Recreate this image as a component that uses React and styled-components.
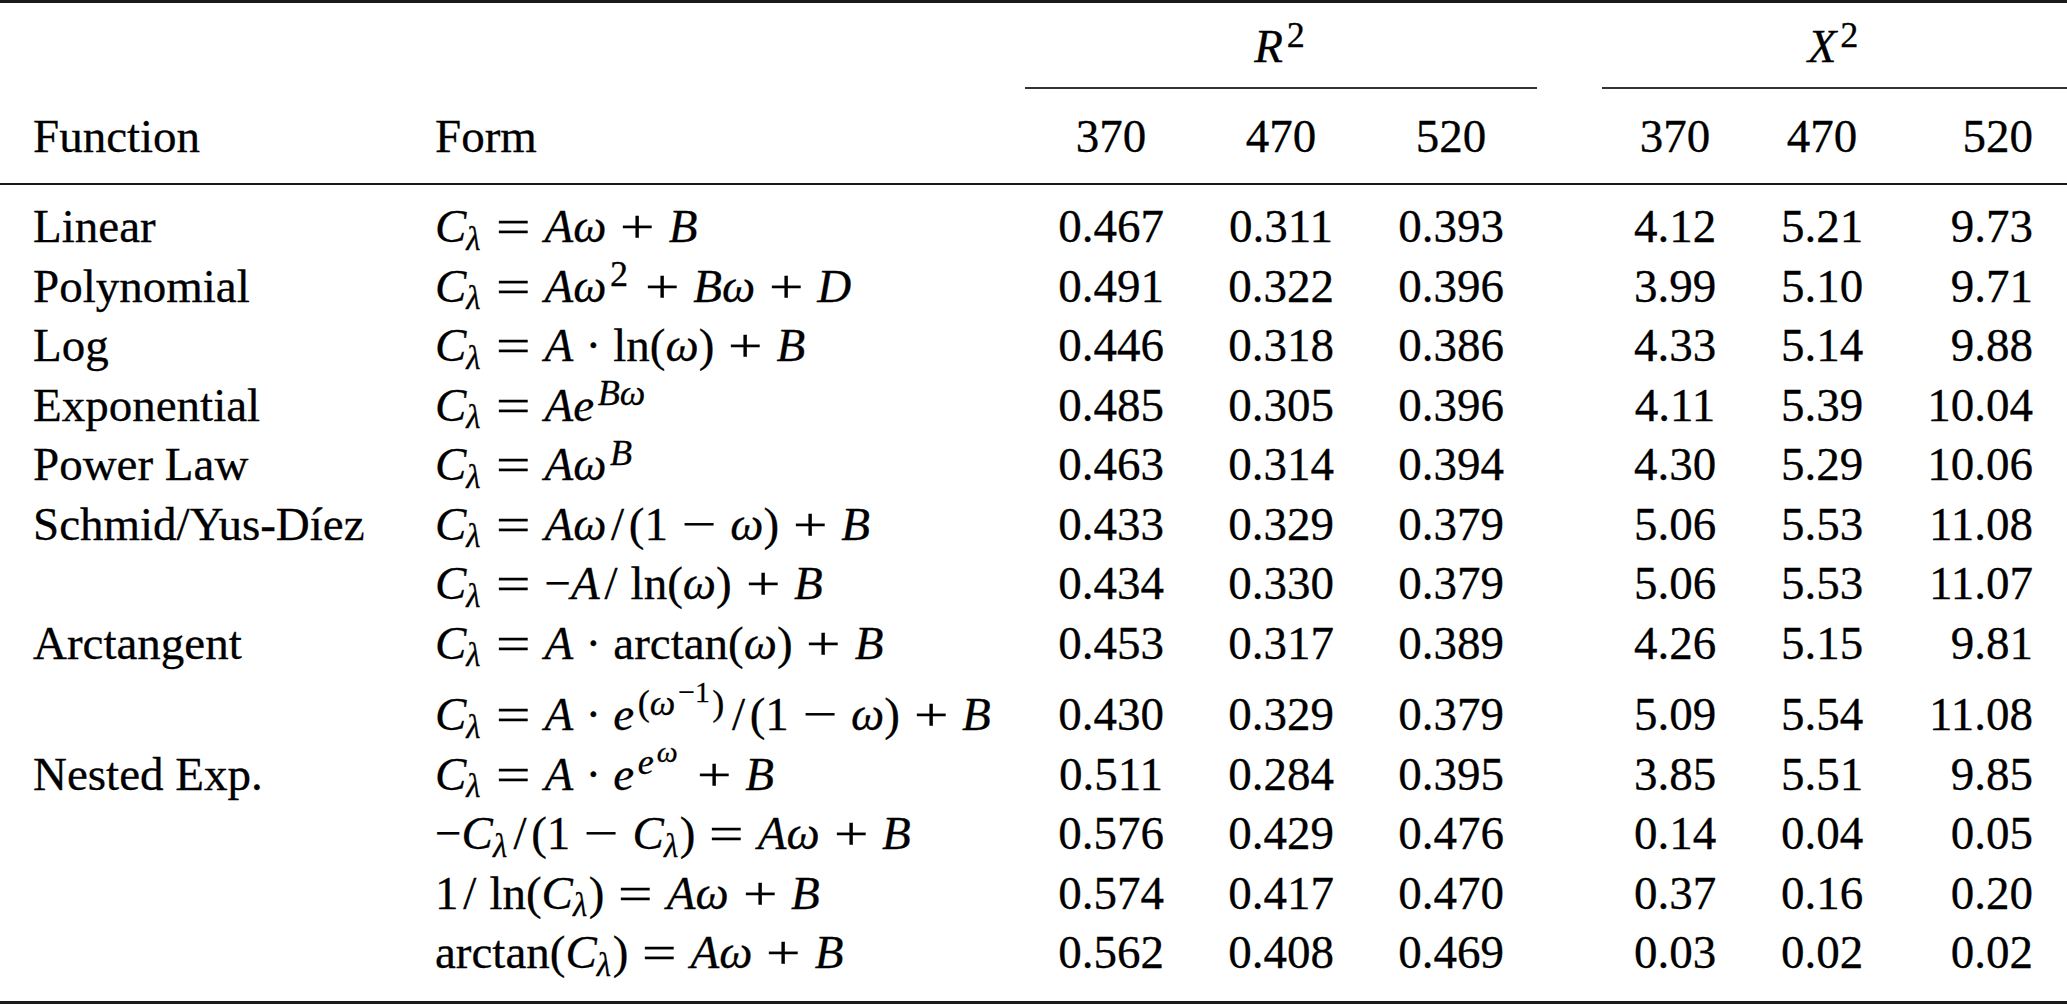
import styled, { createGlobalStyle } from 'styled-components';

const GlobalStyle = createGlobalStyle`
  html, body {
    margin: 0;
    padding: 0;
    background: #fff;
  }
  body {
    font-family: "Liberation Serif", "Times New Roman", serif;
    color: #000;
  }
`;

// every row of the table shares this column template
const COLUMNS = '435px 590px 172px 168px 172px 65px 146px 148px 171px';

const Table = styled.div`
  width: 2067px;
  font-family: "Liberation Serif", "Times New Roman", serif;
  font-size: 47px;
  color: #000;
  -webkit-text-stroke: 0.3px #000;
  border-top: 3px solid #1a1a1a;
  border-bottom: 3px solid #1a1a1a;
`;

const GroupRow = styled.div`
  display: grid;
  grid-template-columns: ${COLUMNS};
  height: 86px;
`;

const GroupLabel = styled.div`
  grid-column: ${({ $col }) => `${$col} / span 3`};
  display: flex;
  align-items: flex-end;
  justify-content: center;
  box-sizing: border-box;
  padding-bottom: 11px;
  border-bottom: 2px solid #333;
  line-height: 60px;
`;

const HeadRow = styled.div`
  display: grid;
  grid-template-columns: ${COLUMNS};
  align-items: end;
  box-sizing: border-box;
  height: 96px;
  padding-bottom: 17px;
  border-bottom: 2px solid #1a1a1a;
  line-height: 60px;
`;

const Body = styled.div`
  padding: 12px 0 18px;
`;

const Row = styled.div`
  display: grid;
  grid-template-columns: ${COLUMNS};
  line-height: 59.5px;
  padding-top: ${({ $tall }) => ($tall ? '12px' : '0')};
`;

const Cell = styled.div`
  text-align: ${({ $align }) => $align || 'center'};
  white-space: nowrap;
  padding-left: ${({ $first }) => ($first ? '33px' : '0')};
  padding-right: ${({ $last }) => ($last ? '34px' : '0')};
`;

// math pieces
const V = styled.span`
  font-style: italic;
`;

const Sub = styled.span`
  font-size: 0.7em;
  line-height: 0;
  vertical-align: -0.24em;
  margin-right: 0.05em;
`;

const Sup = styled.span`
  font-size: ${({ $inner }) => ($inner ? '0.82em' : '0.77em')};
  line-height: 0;
  vertical-align: 0.42em;
  margin-left: 0.1em;
  margin-right: 0.08em;
`;

const Op = styled.span`
  display: inline-block;
  margin: 0 0.38em;
  transform: scaleX(1.3);
`;

const Dot = styled.span`
  margin: 0 0.26em;
`;

const Slash = styled.span`
  margin: 0 0.1em;
`;

const Fn = styled.span`
  margin-left: ${({ $gap }) => ($gap ? '0.18em' : '0')};
`;

const CL = () => (
  <>
    <V>C</V>
    <Sub>
      <V>λ</V>
    </Sub>
  </>
);
const Eq = () => <Op>=</Op>;
const Plus = () => <Op>+</Op>;
const Minus = () => <Op>−</Op>;
const Cdot = () => <Dot>·</Dot>;
const Om = () => <V>ω</V>;
const Sl = () => <Slash>/</Slash>;

const rows = [
  {
    name: 'Linear',
    form: (<><CL /><Eq /><V>A</V><Om /><Plus /><V>B</V></>),
    r2: ['0.467', '0.311', '0.393'],
    x2: ['4.12', '5.21', '9.73'],
  },
  {
    name: 'Polynomial',
    form: (<><CL /><Eq /><V>A</V><Om /><Sup>2</Sup><Plus /><V>B</V><Om /><Plus /><V>D</V></>),
    r2: ['0.491', '0.322', '0.396'],
    x2: ['3.99', '5.10', '9.71'],
  },
  {
    name: 'Log',
    form: (<><CL /><Eq /><V>A</V><Cdot /><Fn>ln</Fn>(<Om />)<Plus /><V>B</V></>),
    r2: ['0.446', '0.318', '0.386'],
    x2: ['4.33', '5.14', '9.88'],
  },
  {
    name: 'Exponential',
    form: (<><CL /><Eq /><V>A</V><V>e</V><Sup><V>B</V><Om /></Sup></>),
    r2: ['0.485', '0.305', '0.396'],
    x2: ['4.11', '5.39', '10.04'],
  },
  {
    name: 'Power Law',
    form: (<><CL /><Eq /><V>A</V><Om /><Sup><V>B</V></Sup></>),
    r2: ['0.463', '0.314', '0.394'],
    x2: ['4.30', '5.29', '10.06'],
  },
  {
    name: 'Schmid/Yus-Díez',
    form: (<><CL /><Eq /><V>A</V><Om /><Sl />(1<Minus /><Om />)<Plus /><V>B</V></>),
    r2: ['0.433', '0.329', '0.379'],
    x2: ['5.06', '5.53', '11.08'],
  },
  {
    name: '',
    form: (<><CL /><Eq />−<V>A</V><Sl /><Fn $gap>ln</Fn>(<Om />)<Plus /><V>B</V></>),
    r2: ['0.434', '0.330', '0.379'],
    x2: ['5.06', '5.53', '11.07'],
  },
  {
    name: 'Arctangent',
    form: (<><CL /><Eq /><V>A</V><Cdot /><Fn>arctan</Fn>(<Om />)<Plus /><V>B</V></>),
    r2: ['0.453', '0.317', '0.389'],
    x2: ['4.26', '5.15', '9.81'],
  },
  {
    name: '',
    tall: true,
    form: (<><CL /><Eq /><V>A</V><Cdot /><V>e</V><Sup>(<Om /><Sup $inner>−1</Sup>)</Sup><Sl />(1<Minus /><Om />)<Plus /><V>B</V></>),
    r2: ['0.430', '0.329', '0.379'],
    x2: ['5.09', '5.54', '11.08'],
  },
  {
    name: 'Nested Exp.',
    form: (<><CL /><Eq /><V>A</V><Cdot /><V>e</V><Sup><V>e</V><Sup $inner><Om /></Sup></Sup><Plus /><V>B</V></>),
    r2: ['0.511', '0.284', '0.395'],
    x2: ['3.85', '5.51', '9.85'],
  },
  {
    name: '',
    form: (<>−<CL /><Sl />(1<Minus /><CL />)<Eq /><V>A</V><Om /><Plus /><V>B</V></>),
    r2: ['0.576', '0.429', '0.476'],
    x2: ['0.14', '0.04', '0.05'],
  },
  {
    name: '',
    form: (<>1<Sl /><Fn $gap>ln</Fn>(<CL />)<Eq /><V>A</V><Om /><Plus /><V>B</V></>),
    r2: ['0.574', '0.417', '0.470'],
    x2: ['0.37', '0.16', '0.20'],
  },
  {
    name: '',
    form: (<><Fn>arctan</Fn>(<CL />)<Eq /><V>A</V><Om /><Plus /><V>B</V></>),
    r2: ['0.562', '0.408', '0.469'],
    x2: ['0.03', '0.02', '0.02'],
  },
];

const wavelengths = ['370', '470', '520'];

const App = () => (
  <>
    <GlobalStyle />
    <Table>
      <GroupRow>
        <GroupLabel $col={3}>
          <span>
            <V>R</V>
            <Sup>2</Sup>
          </span>
        </GroupLabel>
        <GroupLabel $col={7}>
          <span>
            <V>X</V>
            <Sup>2</Sup>
          </span>
        </GroupLabel>
      </GroupRow>

      <HeadRow>
        <Cell $align="left" $first>Function</Cell>
        <Cell $align="left">Form</Cell>
        {wavelengths.map((w) => (
          <Cell key={`r${w}`}>{w}</Cell>
        ))}
        <Cell />
        <Cell>370</Cell>
        <Cell>470</Cell>
        <Cell $align="right" $last>520</Cell>
      </HeadRow>

      <Body>
        {rows.map((row, i) => (
          <Row key={i} $tall={row.tall}>
            <Cell $align="left" $first>{row.name}</Cell>
            <Cell $align="left">{row.form}</Cell>
            {row.r2.map((v, j) => (
              <Cell key={`r${j}`}>{v}</Cell>
            ))}
            <Cell />
            <Cell>{row.x2[0]}</Cell>
            <Cell>{row.x2[1]}</Cell>
            <Cell $align="right" $last>{row.x2[2]}</Cell>
          </Row>
        ))}
      </Body>
    </Table>
  </>
);

export default App;
